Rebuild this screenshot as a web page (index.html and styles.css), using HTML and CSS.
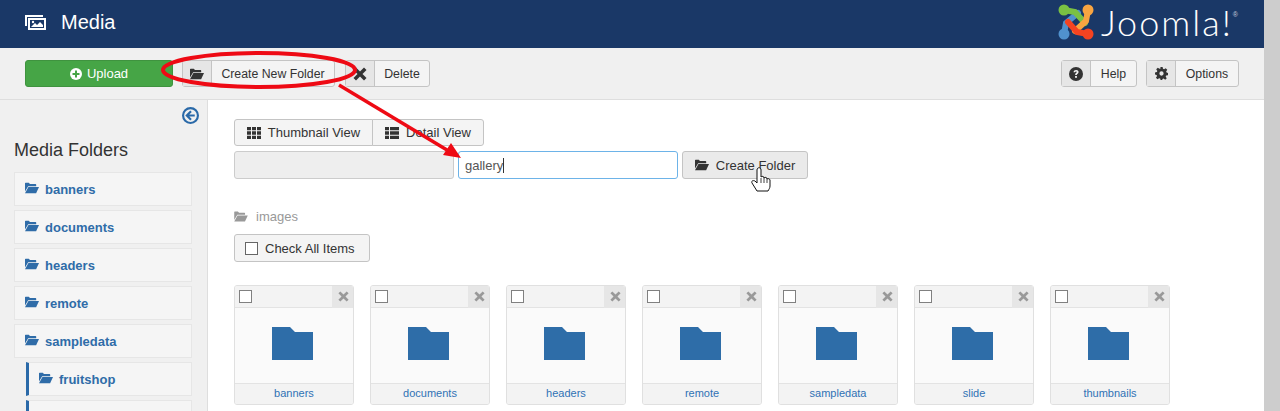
FILE: index.html
```html
<!DOCTYPE html>
<html lang="en">
<head>
<meta charset="utf-8">
<title>Media</title>
<link rel="stylesheet" href="styles.css">
</head>
<body>
<svg class="defs" width="0" height="0" aria-hidden="true">
  <symbol id="folder-open" viewBox="0 0 16 13">
    <path d="M0 1.2Q0 .5.7.5h3.6l1.4 1.5h6.4q.7 0 .7.7V4.4H3.6L0 10.500Z"/>
    <path d="M3.900 5.300H16l-3.300 7.200H0Z"/>
  </symbol>
  <symbol id="x-icon" viewBox="0 0 14 14">
    <path d="M3 .5 7 4.500 11 .5 13.500 3 9.500 7l4 4-2.500 2.500-4-4-4 4L.5 11l4-4-4-4Z"/>
  </symbol>
</svg>
<div class="page">
  <div class="app">
    <header class="topbar">
      <div class="title">
        <svg class="title-icon" viewBox="0 0 21 15" width="21" height="15">
          <path fill="#fff" d="M0 0h18v2H2v9H0Z"/>
          <path fill="#fff" fill-rule="evenodd" d="M3 3h18v12H3ZM5 5v8h14V5Z"/>
          <path fill="#fff" d="M6 12l4-4 2 2 3-3 3 3v2Z"/>
          <circle fill="#fff" cx="8" cy="7" r="1.200"/>
        </svg>
        <span>Media</span>
      </div>
      <div class="logo">
        <svg class="logo-mark" viewBox="0 0 36 36" width="36" height="36" fill="none" stroke-width="6" stroke-linecap="round">
          <path stroke="#5091cd" d="M6 30 L8 19 L20 9"/>
          <path stroke="#7ac143" d="M6 6 L17 8 L27 19"/>
          <path stroke="#f9a541" d="M30 6 L28 17 L17 27"/>
          <path stroke="#f44321" d="M30 30 L19 28 L10 18"/>
          <circle fill="#7ac143" cx="6" cy="6" r="5.500"/>
          <circle fill="#f9a541" cx="30" cy="6" r="5.500"/>
          <circle fill="#f44321" cx="30" cy="30" r="5.500"/>
          <circle fill="#5091cd" cx="6" cy="30" r="5.500"/>
        </svg>
        <span class="logo-text">Joomla!</span><sup class="logo-reg">®</sup>
      </div>
    </header>

    <div class="toolbar">
      <button class="btn btn-upload">
        <svg viewBox="0 0 12 12" width="12" height="12"><circle cx="6" cy="6" r="6" fill="#fff"/><path d="M5 2.500h2V5h2.500v2H7v2.500H5V7H2.500V5H5Z" fill="#46a546"/></svg>
        Upload
      </button>
      <button class="btn btn-split w-create"><span class="btn-ico"><svg class="ico16"><use href="#folder-open"/></svg></span><span class="btn-txt">Create New Folder</span></button>
      <button class="btn btn-split w-delete"><span class="btn-ico"><svg class="ico-x"><use href="#x-icon"/></svg></span><span class="btn-txt">Delete</span></button>
      <span class="spacer"></span>
      <button class="btn btn-split w-help"><span class="btn-ico"><svg viewBox="0 0 14 14" width="14" height="14"><circle cx="7" cy="7" r="7" fill="#333"/><path d="M4.500 5.200C4.700 3.700 5.700 3 7.100 3c1.500 0 2.500.9 2.500 2 0 1.800-1.800 1.700-1.800 3H6.100c0-2 1.700-2 1.700-2.900 0-.4-.3-.7-.8-.7-.6 0-.9.3-1 .9Z" fill="#f4f4f4"/><rect x="6.100" y="9" width="1.800" height="1.800" fill="#f4f4f4"/></svg></span><span class="btn-txt">Help</span></button>
      <button class="btn btn-split w-options"><span class="btn-ico"><svg viewBox="0 0 14 14" width="13" height="13"><path fill="#333" fill-rule="evenodd" d="M5.800 0h2.400l.4 2 1.200.5L11.500 1.300l1.700 1.700L12 4.800l.5 1.200 1.500.4v2.400l-2 .4-.5 1.200 1.200 1.700-1.700 1.700L9.200 12.400 8 12.900 7.800 14H6l-.4-1.500-1.200-.5-1.700 1.200-1.700-1.700L2.200 9.800 1.700 8.600 0 8.200V5.800l2-.4.500-1.200L1.300 2.500 3 .8l1.800 1.200L6 1.500ZM7 4.700a2.300 2.300 0 1 0 0 4.600 2.300 2.300 0 0 0 0-4.600Z"/></svg></span><span class="btn-txt">Options</span></button>
    </div>

    <div class="content">
      <aside class="sidebar">
        <div class="collapse-row">
          <svg viewBox="0 0 16 16" width="17" height="17"><circle cx="8" cy="8" r="7" fill="none" stroke="#2a69a8" stroke-width="2"/><path d="M8.500 4 4.500 8l4 4M4.500 8H12" fill="none" stroke="#2a69a8" stroke-width="2"/></svg>
        </div>
        <h2 class="side-title">Media Folders</h2>
        <ul class="tree">
          <li class="tree-item"><svg class="ico-tree"><use href="#folder-open"/></svg>banners</li>
          <li class="tree-item"><svg class="ico-tree"><use href="#folder-open"/></svg>documents</li>
          <li class="tree-item"><svg class="ico-tree"><use href="#folder-open"/></svg>headers</li>
          <li class="tree-item"><svg class="ico-tree"><use href="#folder-open"/></svg>remote</li>
          <li class="tree-item"><svg class="ico-tree"><use href="#folder-open"/></svg>sampledata</li>
          <li class="tree-item nested"><svg class="ico-tree"><use href="#folder-open"/></svg>fruitshop</li>
          <li class="tree-item nested cut"></li>
        </ul>
      </aside>

      <main class="main">
        <div class="view-group">
          <button class="btn view-btn w-thumb">
            <svg viewBox="0 0 14 12" width="14" height="12" fill="#333"><path d="M0 0h4v3.300H0ZM5 0h4v3.300H5ZM10 0h4v3.300h-4ZM0 4.350h4v3.300H0ZM5 4.350h4v3.300H5ZM10 4.350h4v3.300h-4ZM0 8.700h4V12H0ZM5 8.700h4V12H5ZM10 8.700h4V12h-4Z"/></svg>
            Thumbnail View
          </button>
          <button class="btn view-btn w-detail">
            <svg viewBox="0 0 14 12" width="14" height="12" fill="#333"><path d="M0 0h4v3.300H0ZM5 0h9v3.300H5ZM0 4.350h4v3.300H0ZM5 4.350h9v3.300H5ZM0 8.700h4V12H0ZM5 8.700h9V12H5Z"/></svg>
            Detail View
          </button>
        </div>
        <div class="create-row">
          <div class="path-field"></div>
          <div class="name-field">gallery<span class="caret"></span></div>
          <button class="btn create-btn"><svg class="ico16"><use href="#folder-open"/></svg>Create Folder</button>
        </div>
        <div class="crumb"><svg class="ico-crumb"><use href="#folder-open"/></svg>images</div>
        <button class="btn check-all"><span class="box"></span>Check All Items</button>
        <div class="cards">
          <article class="card"><div class="card-top"><span class="box"></span><span class="card-x"><svg class="ico-cardx"><use href="#x-icon"/></svg></span></div><div class="card-body"><svg class="folder" viewBox="0 0 41 33"><path d="M0 0h18l5 5h18v28H0Z"/></svg></div><div class="card-name">banners</div></article>
          <article class="card"><div class="card-top"><span class="box"></span><span class="card-x"><svg class="ico-cardx"><use href="#x-icon"/></svg></span></div><div class="card-body"><svg class="folder" viewBox="0 0 41 33"><path d="M0 0h18l5 5h18v28H0Z"/></svg></div><div class="card-name">documents</div></article>
          <article class="card"><div class="card-top"><span class="box"></span><span class="card-x"><svg class="ico-cardx"><use href="#x-icon"/></svg></span></div><div class="card-body"><svg class="folder" viewBox="0 0 41 33"><path d="M0 0h18l5 5h18v28H0Z"/></svg></div><div class="card-name">headers</div></article>
          <article class="card"><div class="card-top"><span class="box"></span><span class="card-x"><svg class="ico-cardx"><use href="#x-icon"/></svg></span></div><div class="card-body"><svg class="folder" viewBox="0 0 41 33"><path d="M0 0h18l5 5h18v28H0Z"/></svg></div><div class="card-name">remote</div></article>
          <article class="card"><div class="card-top"><span class="box"></span><span class="card-x"><svg class="ico-cardx"><use href="#x-icon"/></svg></span></div><div class="card-body"><svg class="folder" viewBox="0 0 41 33"><path d="M0 0h18l5 5h18v28H0Z"/></svg></div><div class="card-name">sampledata</div></article>
          <article class="card"><div class="card-top"><span class="box"></span><span class="card-x"><svg class="ico-cardx"><use href="#x-icon"/></svg></span></div><div class="card-body"><svg class="folder" viewBox="0 0 41 33"><path d="M0 0h18l5 5h18v28H0Z"/></svg></div><div class="card-name">slide</div></article>
          <article class="card"><div class="card-top"><span class="box"></span><span class="card-x"><svg class="ico-cardx"><use href="#x-icon"/></svg></span></div><div class="card-body"><svg class="folder" viewBox="0 0 41 33"><path d="M0 0h18l5 5h18v28H0Z"/></svg></div><div class="card-name">thumbnails</div></article>
        </div>
      </main>
    </div>
  </div>
  <div class="scrollbar"></div>
</div>

<svg class="annotation" viewBox="0 0 1280 411" width="1280" height="411" aria-hidden="true">
  <ellipse cx="259" cy="70" rx="96" ry="17" fill="none" stroke="#ee0a14" stroke-width="4"/>
  <path d="M339 85 447 150" stroke="#ee0a14" stroke-width="3.500" fill="none"/>
  <path d="M461 158 443 155 451 143Z" fill="#ee0a14"/>
  <path d="M757 191 752 183c-1-2 1-3 3-2l2 2V170c0-3 4-3 4 0v7c1-1 3-1 3 1 1-1 3-1 3 1 1-1 3 0 3 1v6c0 2-1 3-2 5Z" fill="#fff" stroke="#111" stroke-width="1"/>
  <path d="M761 178v5M764 178v5M767 179v4" fill="none" stroke="#111" stroke-width=".8"/>
</svg>
</body>
</html>
```
FILE: styles.css
```css
* { box-sizing: border-box; }
html, body { margin: 0; height: 411px; overflow: hidden; }
body {
  font-family: "Liberation Sans", Arial, sans-serif;
  font-size: 13px;
  color: #333;
  background: #fff;
  position: relative;
}
.defs { position: absolute; }
.page { display: flex; height: 411px; overflow: hidden; }
.app { width: 1264px; height: 411px; display: flex; flex-direction: column; overflow: hidden; }
.scrollbar { width: 16px; background: #cdcdcd; }

.topbar {
  height: 48px;
  background: #1a3867;
  color: #fff;
  display: flex;
  justify-content: space-between;
  align-items: center;
  padding: 0 26px 0 25px;
  flex: none;
}
.title { display: flex; align-items: center; gap: 15px; font-size: 20px; margin-top: -3px; }
.logo { display: flex; align-items: center; margin-top: -4px; position: relative; }
.logo-mark { margin-right: 7px; }
.logo-text {
  font-family: Lato, "Open Sans", sans-serif;
  font-weight: 300;
  font-size: 36px;
  line-height: 36px;
  letter-spacing: 2px;
}
.logo-reg { font-size: 7px; align-self: flex-start; margin: 7px 0 0 0; color: #ccd; line-height: 8px; }

.toolbar {
  height: 52px;
  flex: none;
  background: #f0f0f0;
  border-bottom: 1px solid #dedede;
  padding: 12px 25px 0;
  display: flex;
  align-items: flex-start;
  gap: 9px;
}
.spacer { flex: 1; }
.btn {
  font: inherit;
  font-size: 13px;
  color: #333;
  height: 27px;
  padding: 0;
  background: #f4f4f4;
  border: 1px solid #c4c4c4;
  border-radius: 3px;
  display: inline-flex;
  align-items: center;
}
.btn-upload {
  width: 148px;
  background: #46a546;
  border-color: #3f933f;
  color: #fff;
  justify-content: center;
  gap: 5px;
}
.btn-split { align-items: stretch; }
.btn-ico {
  width: 29px;
  flex: none;
  background: #e6e6e6;
  border-right: 1px solid #c4c4c4;
  display: flex;
  align-items: center;
  justify-content: center;
}
.btn-txt { flex: 1; display: flex; align-items: center; justify-content: center; font-size: 12.300px; }
.w-create { width: 153px; }
.w-delete { width: 85px; margin-left: 1px; }
.w-help { width: 76px; }
.w-options { width: 93px; }
.ico16 { width: 14px; height: 12px; fill: #333; }
.ico-x { width: 14px; height: 14px; fill: #333; }

.content { flex: 1; display: flex; min-height: 0; overflow: hidden; }
.sidebar {
  width: 208px;
  flex: none;
  background: #f0f0f0;
  border-right: 1px solid #dedede;
  padding: 0 15px 0 14px;
  overflow: hidden;
}
.collapse-row { display: flex; justify-content: flex-end; padding: 7px 0 0; margin-right: -7px; height: 24px; }
.side-title { font-size: 18px; font-weight: 400; margin: 15px 0 11px; line-height: 22px; color: #333; }
.tree { list-style: none; margin: 0; padding: 0; display: flex; flex-direction: column; gap: 4px; }
.tree-item {
  height: 34px;
  flex: none;
  background: #f5f5f5;
  border: 1px solid #e6e6e6;
  display: flex;
  align-items: center;
  padding-left: 10px;
  font-weight: 700;
  font-size: 13px;
  color: #2f6ca8;
}
.tree-item.nested { margin-left: 12px; border-left: 3px solid #2a69a8; padding-left: 10px; }
.tree-item.cut { height: 11px; border-bottom: 0; }
.ico-tree { width: 14px; height: 12px; fill: #2f6ca8; margin-right: 6px; margin-top: -2px; flex: none; }

.main { flex: 1; padding: 19px 0 0 26px; min-width: 0; overflow: hidden; }
.view-group { display: flex; }
.view-btn { justify-content: center; gap: 7px; }
.w-thumb { width: 139px; border-radius: 3px 0 0 3px; }
.w-detail { width: 112px; margin-left: -1px; border-radius: 0 3px 3px 0; }
.create-row { display: flex; gap: 4px; margin-top: 5px; height: 28px; }
.path-field { width: 220px; background: #eee; border: 1px solid #ccc; border-radius: 3px; }
.name-field {
  width: 220px;
  background: #fff;
  border: 1px solid #6db3e8;
  border-radius: 3px;
  display: flex;
  align-items: center;
  padding-left: 6px;
  font-size: 13px;
  color: #555;
}
.caret { width: 1px; height: 15px; background: #333; }
.create-btn { width: 126px; height: 28px; background: #eaeaea; justify-content: center; gap: 7px; }
.crumb { display: flex; align-items: center; margin-top: 30px; height: 15px; color: #999; font-size: 13px; }
.ico-crumb { width: 14px; height: 11px; fill: #999; margin-right: 8px; }
.check-all { margin-top: 10px; width: 136px; height: 28px; justify-content: flex-start; padding-left: 10px; gap: 7px; }
.box { width: 13px; height: 13px; border: 1px solid #666; background: #fff; display: block; flex: none; }

.cards { display: flex; gap: 16px; margin-top: 23px; }
.card {
  width: 120px;
  height: 120px;
  flex: none;
  border: 1px solid #e0e0e0;
  border-radius: 3px;
  background: #fafafa;
  display: flex;
  flex-direction: column;
  overflow: hidden;
}
.card-top {
  height: 22px;
  flex: none;
  background: #f3f3f3;
  border-bottom: 1px solid #e3e3e3;
  display: flex;
  justify-content: space-between;
  padding-left: 4px;
  align-items: center;
}
.card-top .box { border-color: #808080; }
.card-x { width: 21px; height: 22px; padding-left: 1px; background: #e6e6e6; display: flex; align-items: center; justify-content: center; }
.ico-cardx { width: 11px; height: 11px; fill: #999; }
.card-body { flex: 1; display: flex; align-items: flex-start; justify-content: center; padding: 19px 4px 0 0; }
.folder { width: 41px; height: 33px; fill: #2e6da8; }
.card-name {
  height: 21px;
  flex: none;
  background: #f3f3f3;
  border-top: 1px solid #e3e3e3;
  text-align: center;
  font-size: 11px;
  line-height: 19px;
  color: #3072b5;
}
.annotation { position: absolute; left: 0; top: 0; pointer-events: none; }
```
